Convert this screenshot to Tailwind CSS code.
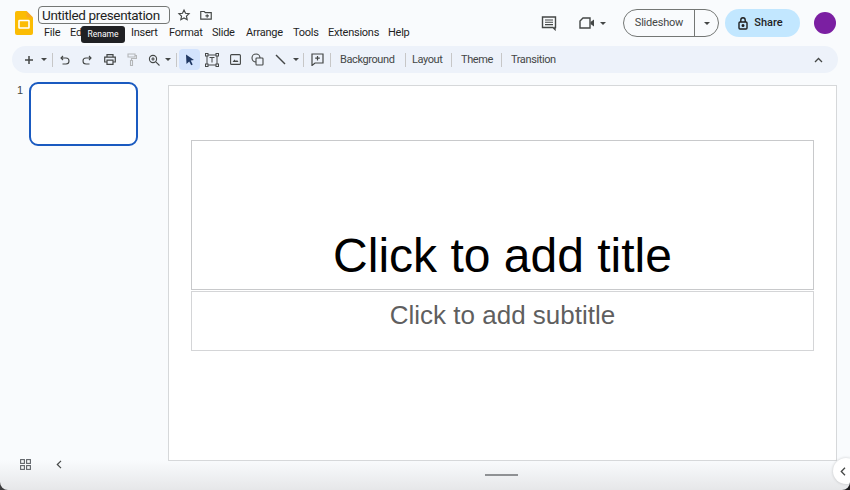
<!DOCTYPE html>
<html>
<head>
<meta charset="utf-8">
<script src="https://cdn.jsdelivr.net/npm/@tailwindcss/browser@4"></script>
</head>
<body class="m-0">
<div class="relative w-[850px] h-[490px] overflow-hidden bg-[#f9fbfd] font-['Roboto',sans-serif] text-[#444746]">

  <!-- header -->
  <header class="flex h-[46px] items-start">
    <svg class="ml-[15px] mt-[11px] shrink-0" width="18" height="24" viewBox="0 0 18 24">
      <path d="M2 0h9.5L18 6.5V22a2 2 0 0 1-2 2H2a2 2 0 0 1-2-2V2a2 2 0 0 1 2-2z" fill="#fbbc04"/>
      <path d="M11.5 0L18 6.5h-5a1.5 1.5 0 0 1-1.5-1.5z" fill="#f9a825"/>
      <rect x="4" y="9.5" width="10" height="7.5" rx="0.5" fill="none" stroke="#fff" stroke-width="1.6"/>
    </svg>
    <div class="ml-[5px] w-[400px] shrink-0">
      <div class="flex items-center mt-[6px]">
        <div class="w-[132px] h-[18px] border border-[#747775] rounded-[4px] pl-[3px] text-[13.500px] tracking-[-0.35px] leading-[16px] text-[#1f1f1f] whitespace-nowrap overflow-hidden">Untitled presentation</div>
        <svg class="ml-[7px]" width="14" height="14" viewBox="0 0 24 24" fill="none" stroke="#444746" stroke-width="2"><path d="M12 3.5l2.6 5.6 6.1.7-4.5 4.2 1.2 6L12 17l-5.4 3 1.2-6-4.5-4.2 6.1-.7z"/></svg>
        <svg class="ml-[8px]" width="14" height="14" viewBox="0 0 24 24" fill="none" stroke="#444746" stroke-width="2"><path d="M3 6h6l2 2h10v11H3z"/><path d="M14 10.5v6M11 13.500h6" stroke-width="1.8"/></svg>
      </div>
      <nav class="flex mt-[1px] ml-[6px] text-[11px] tracking-[-0.25px] leading-[16px] text-[#1f1f1f] whitespace-nowrap">
        <span class="w-[26px]">File</span><span class="w-[28px]">Edit</span><span class="w-[33px]">View</span><span class="w-[38px]">Insert</span><span class="w-[43px]">Format</span><span class="w-[34px]">Slide</span><span class="w-[47px]">Arrange</span><span class="w-[35px]">Tools</span><span class="w-[60px]">Extensions</span><span>Help</span>
      </nav>
    </div>
    <div class="ml-auto flex items-center h-[28px] mt-[9px] mr-[14px]">
      <svg width="16" height="16" viewBox="0 0 16 16" fill="none" stroke="#444746" stroke-width="1.4"><path d="M1.500 2h13v10.500h-.5v2l-2-2h-10.500z"/><path d="M4 5h8M4 7.300h8M4 9.600h8" stroke-width="1.1"/></svg>
      <svg class="ml-[22px]" width="16" height="12" viewBox="0 0 16 12" fill="none" stroke="#444746" stroke-width="1.4"><path d="M4 1h7v10H1V4z"/><path d="M11.500 5l3.500-2.500v7L11.500 7z" fill="#444746" stroke="none"/></svg>
      <span class="ml-[5px] w-0 h-0 border-x-[3px] border-x-transparent border-t-[3px] border-t-[#444746]"></span>
      <div class="ml-[17px] flex w-[96px] h-[28px] border border-[#747775] rounded-full text-[11px] tracking-[-0.2px]">
        <div class="w-[71px] border-r border-[#747775] flex items-center justify-center">Slideshow</div>
        <div class="flex-1 flex items-center justify-center"><span class="w-0 h-0 border-x-[3px] border-x-transparent border-t-[3px] border-t-[#444746]"></span></div>
      </div>
      <div class="ml-[6px] flex items-center justify-center gap-[6px] w-[75px] h-[28px] pr-[4px] rounded-full bg-[#c2e7ff] text-[11px] font-medium text-[#1f1f1f]">
        <svg width="10" height="13" viewBox="0 0 10 13" fill="none" stroke="#1f1f1f" stroke-width="1.400"><rect x="1" y="5" width="8" height="7" rx="1"/><path d="M2.800 5V3a2.200 2.200 0 0 1 4.400 0v2"/><circle cx="5" cy="8.500" r="0.800" fill="#1f1f1f"/></svg>
        Share
      </div>
      <div class="ml-[14px] w-[22px] h-[22px] rounded-full bg-[#7b1fa2]"></div>
    </div>
  </header>

  <!-- toolbar -->
  <div class="mx-[12px] h-[27px] rounded-full bg-[#edf2fa] flex items-center text-[11px] tracking-[-0.4px] text-[#444746]">
    <span class="w-[10px]"></span>
    <span class="w-[14px] flex justify-center"><svg width="10" height="10" viewBox="0 0 10 10" stroke="#444746" stroke-width="1.500"><path d="M5 1v8M1 5h8"/></svg></span>
    <span class="w-[16px] flex justify-center"><span class="w-0 h-0 border-x-[3px] border-x-transparent border-t-[3px] border-t-[#444746]"></span></span>
    <span class="w-[1px] h-[14px] bg-[#c7c7c7]"></span>
    <span class="w-[24px] flex justify-center"><svg width="10" height="10" viewBox="0 0 10 10" fill="none" stroke="#444746" stroke-width="1.100"><path d="M3 1L1 3l2 2M1 3h5a3 3 0 0 1 0 6H2.500"/></svg></span>
    <span class="w-[20px] flex justify-center"><svg width="10" height="10" viewBox="0 0 10 10" fill="none" stroke="#444746" stroke-width="1.100"><path d="M7 1l2 2-2 2M9 3H4a3 3 0 0 0 0 6h3.500"/></svg></span>
    <span class="w-[25px] flex justify-center"><svg width="12" height="11" viewBox="0 0 12 11" fill="none" stroke="#444746" stroke-width="1.200"><path d="M3 3V.7h6V3M3 8H.7V3.200h10.600V8H9"/><path d="M3 6.200h6v4.100H3z"/></svg></span>
    <span class="w-[19px] flex justify-center"><svg width="10" height="13" viewBox="0 0 10 13" fill="none" stroke="#b4b6b8" stroke-width="1.100"><path d="M1 1h7v3H1zM8 2.500h1.500v3H4.500v2M3.500 7.500h2v5h-2z"/></svg></span>
    <span class="w-[25px] flex justify-center"><svg width="12" height="12" viewBox="0 0 12 12" fill="none" stroke="#444746" stroke-width="1.100"><circle cx="5" cy="5" r="3.600"/><path d="M7.800 7.800L11.500 11.500M5 3.300v3.400M3.300 5h3.400"/></svg></span>
    <span class="w-[4px] flex justify-center"><span class="shrink-0 w-0 h-0 border-x-[3px] border-x-transparent border-t-[3px] border-t-[#444746]"></span></span>
    <span class="w-[1px] ml-[6px] h-[14px] bg-[#c7c7c7]"></span>
    <span class="ml-[2px] w-[21px] h-[21px] rounded-[4px] bg-[#d3e3fd] flex items-center justify-center"><svg width="10" height="12" viewBox="0 0 10 12" fill="#1f3763"><path d="M1 .500l8 5.500-3.300.6 2 3.900-1.500.8-2-3.900L1.500 10z"/></svg></span>
    <span class="w-[24px] flex justify-center"><svg width="14" height="14" viewBox="0 0 14 14" fill="none" stroke="#444746" stroke-width="1"><rect x="2" y="2" width="10" height="10"/><rect x=".5" y=".5" width="2.500" height="2.500" fill="#edf2fa"/><rect x="11" y=".5" width="2.500" height="2.500" fill="#edf2fa"/><rect x=".5" y="11" width="2.500" height="2.500" fill="#edf2fa"/><rect x="11" y="11" width="2.500" height="2.500" fill="#edf2fa"/><path d="M4.500 4.500h5M7 4.500v5"/></svg></span>
    <span class="w-[22px] flex justify-center"><svg width="11" height="11" viewBox="0 0 11 11" fill="none" stroke="#444746" stroke-width="1.100"><rect x=".6" y=".6" width="9.800" height="9.800" rx="1"/><path d="M2.500 8l2-2.500 1.500 1.500 1-1 1.500 2z" fill="#444746" stroke="none"/></svg></span>
    <span class="w-[23px] flex justify-center"><svg width="13" height="13" viewBox="0 0 13 13" fill="none" stroke="#444746" stroke-width="1.100"><circle cx="5" cy="5" r="4"/><rect x="5" y="5" width="7" height="7" rx=".8" fill="#edf2fa"/></svg></span>
    <span class="w-[23px] flex justify-center"><svg width="11" height="11" viewBox="0 0 11 11" stroke="#444746" stroke-width="1.400"><path d="M1 1l9 9"/></svg></span>
    <span class="w-[8px] flex justify-center"><span class="shrink-0 w-0 h-0 border-x-[3px] border-x-transparent border-t-[3px] border-t-[#444746]"></span></span>
    <span class="w-[1px] ml-[3px] h-[14px] bg-[#c7c7c7]"></span>
    <span class="w-[26px] flex justify-center"><svg width="13" height="13" viewBox="0 0 13 13" fill="none" stroke="#444746" stroke-width="1.200"><path d="M1 1h11v9H4l-3 2.500z"/><path d="M6.500 3v4.500M4.200 5.200h4.600"/></svg></span>
    <span class="w-[1px] h-[14px] bg-[#c7c7c7]"></span>
    <span class="w-[74px] pl-[9px] pt-[1px] whitespace-nowrap">Background</span>
    <span class="w-[1px] h-[14px] bg-[#c7c7c7]"></span>
    <span class="w-[45px] pl-[6px] pt-[1px]">Layout</span>
    <span class="w-[1px] h-[14px] bg-[#c7c7c7]"></span>
    <span class="w-[49px] pl-[9px] pt-[1px]">Theme</span>
    <span class="w-[1px] h-[14px] bg-[#c7c7c7]"></span>
    <span class="pl-[9px] pt-[1px]">Transition</span>
    <svg class="ml-auto mr-[15px]" width="9" height="6" viewBox="0 0 9 6" fill="none" stroke="#444746" stroke-width="1.300"><path d="M1 5l3.500-3.500L8 5"/></svg>
  </div>

  <!-- main -->
  <main class="flex mt-[12px] h-[376px]">
    <aside class="w-[168px] shrink-0 relative flex pl-[17px]">
      <span class="text-[11px] leading-[12px] w-[12px] font-['Liberation_Sans',sans-serif] text-[#444746] -mt-[2px] pt-[1px]">1</span>
      <div class="w-[109px] h-[64px] -mt-[3px] rounded-[9px] border-2 border-[#1a5ac0] bg-white"></div>
    </aside>
    <div class="w-[669px] h-[376px] bg-white border border-[#d6d8da] pt-[54px] pl-[22px] font-['Liberation_Sans',sans-serif]">
      <div class="w-[623px] h-[150px] border border-[#c8c9cb] flex items-end justify-center pb-[6px] text-[48px] leading-[54px] text-black">Click to add title</div>
      <div class="w-[623px] h-[60px] mt-[1px] border border-[#d4d5d7] flex items-center justify-center pb-[12px] text-[26px] leading-[32px] text-[#5f5f5f]">Click to add subtitle</div>
    </div>
  </main>

  <!-- bottom gradient -->
  <div class="absolute left-0 right-0 bottom-0 h-[30px] bg-gradient-to-b from-[#f9fbfd] to-[#e6e7e9] pointer-events-none"></div>
  <div class="absolute left-[168px] bottom-[29px] w-[669px] h-[1px] bg-[#d6d8da]"></div>

  <!-- bottom controls -->
  <svg class="absolute left-[20px] top-[459px]" width="11" height="11" viewBox="0 0 11 11" fill="none" stroke="#5f6368" stroke-width="1.100"><rect x=".6" y=".6" width="3.800" height="3.800"/><rect x="6.600" y=".6" width="3.800" height="3.800"/><rect x=".6" y="6.600" width="3.800" height="3.800"/><rect x="6.600" y="6.600" width="3.800" height="3.800"/></svg>
  <svg class="absolute left-[56px] top-[460px]" width="6" height="9" viewBox="0 0 6 9" fill="none" stroke="#444746" stroke-width="1.200"><path d="M5 .8L1.300 4.500 5 8.200"/></svg>
  <div class="absolute left-[485px] top-[474px] w-[33px] h-[2px] bg-[#8f9194]"></div>

  <!-- side button & window corners -->
  <div class="absolute left-[833px] top-[458px] w-[26px] h-[26px] rounded-full bg-white shadow-[0_0_3px_rgba(0,0,0,0.2)] flex items-center pl-[7px]">
    <svg width="6" height="9" viewBox="0 0 6 9" fill="none" stroke="#444746" stroke-width="1.300"><path d="M5 .8L1.300 4.500 5 8.200"/></svg>
  </div>
  <svg class="absolute left-0 bottom-0" width="8" height="8" viewBox="0 0 8 8"><path d="M0 0v8h8A8 8 0 0 1 0 0z" fill="#3c3c3e"/></svg>
  <svg class="absolute right-0 bottom-0" width="8" height="8" viewBox="0 0 8 8"><path d="M8 0v8H0A8 8 0 0 0 8 0z" fill="#1c1c1e"/></svg>

  <!-- tooltip -->
  <div class="absolute left-[81px] top-[26px] w-[44px] h-[17px] rounded-[3px] bg-[#202124] text-white text-[8.500px] flex items-center justify-center">Rename</div>
</div>
</body>
</html>
